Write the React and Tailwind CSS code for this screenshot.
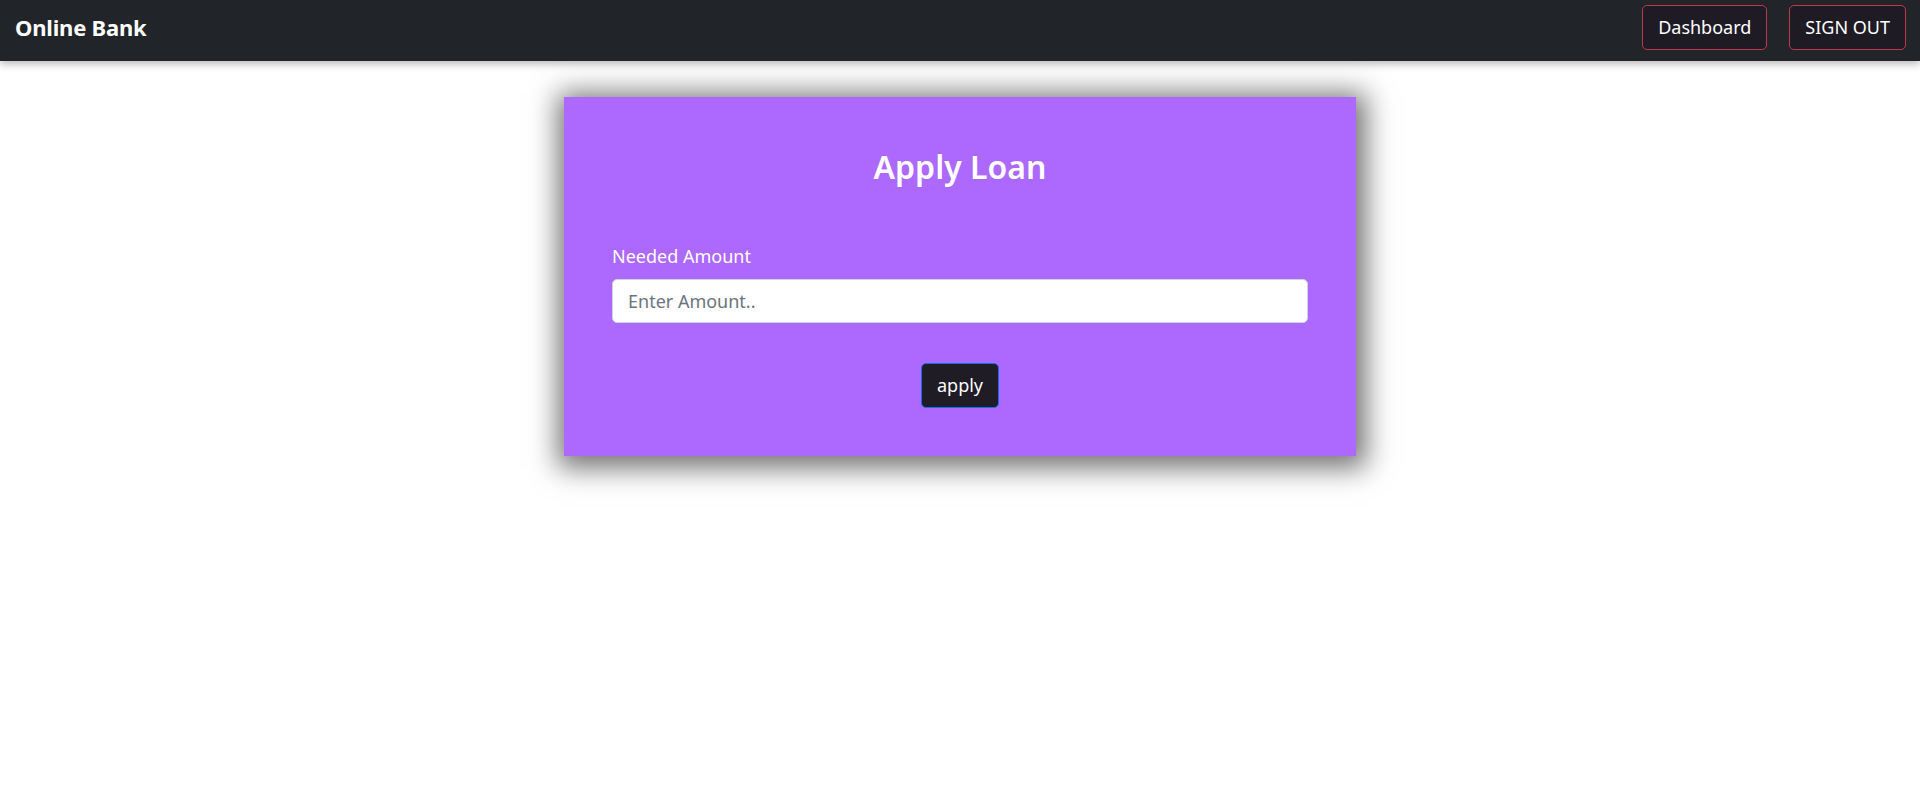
import { useState } from 'react'

/* ── Top bar ── */
function NavBar() {
  return (
    <nav className="relative z-10 h-[61px] bg-[#212529] flex items-center justify-between pl-[15px] pr-[14px] pb-[6px] shadow-[0_3px_8px_rgba(0,0,0,0.28)]">
      <a className="text-white font-bold text-[22px] tracking-[-0.2px]">Online Bank</a>
      <div className="flex items-center gap-[22px]">
        {['Dashboard', 'SIGN OUT'].map(label => (
          <button
            key={label}
            className="h-[45px] px-[15px] rounded-[5px] border border-[#c0394a] bg-[#1f1b25] text-white text-[18px]"
          >
            {label}
          </button>
        ))}
      </div>
    </nav>
  )
}

/* ── Loan form card ── */
function LoanCard() {
  const [amount, setAmount] = useState('')

  return (
    <div className="w-[792px] bg-[#ad68fd] px-12 pt-[50px] pb-12 shadow-[2px_4px_26px_8px_rgba(0,0,0,0.55)]">
      <h2 className="text-center text-white font-semibold text-[32px] leading-[40px]">Apply Loan</h2>

      <label className="block mt-[55px] text-white text-[18px] leading-[28px]">Needed Amount</label>
      <input
        value={amount}
        onChange={e => setAmount(e.target.value)}
        placeholder="Enter Amount.."
        className="mt-[9px] w-full h-[44px] rounded-[5px] bg-white border border-[#ced4da] px-[15px] text-[18px] text-gray-800 placeholder:text-[#6c757d] outline-none"
      />

      <div className="flex justify-center mt-10">
        <button className="h-[45px] w-[78px] rounded-[5px] bg-[#201c26] border border-[#0d6efd] text-white text-[18px]">
          apply
        </button>
      </div>
    </div>
  )
}

export default function App() {
  return (
    <div className="min-h-[802px] bg-white font-['Noto_Sans',sans-serif]">
      <NavBar />
      <main className="flex justify-center pt-9">
        <LoanCard />
      </main>
    </div>
  )
}
